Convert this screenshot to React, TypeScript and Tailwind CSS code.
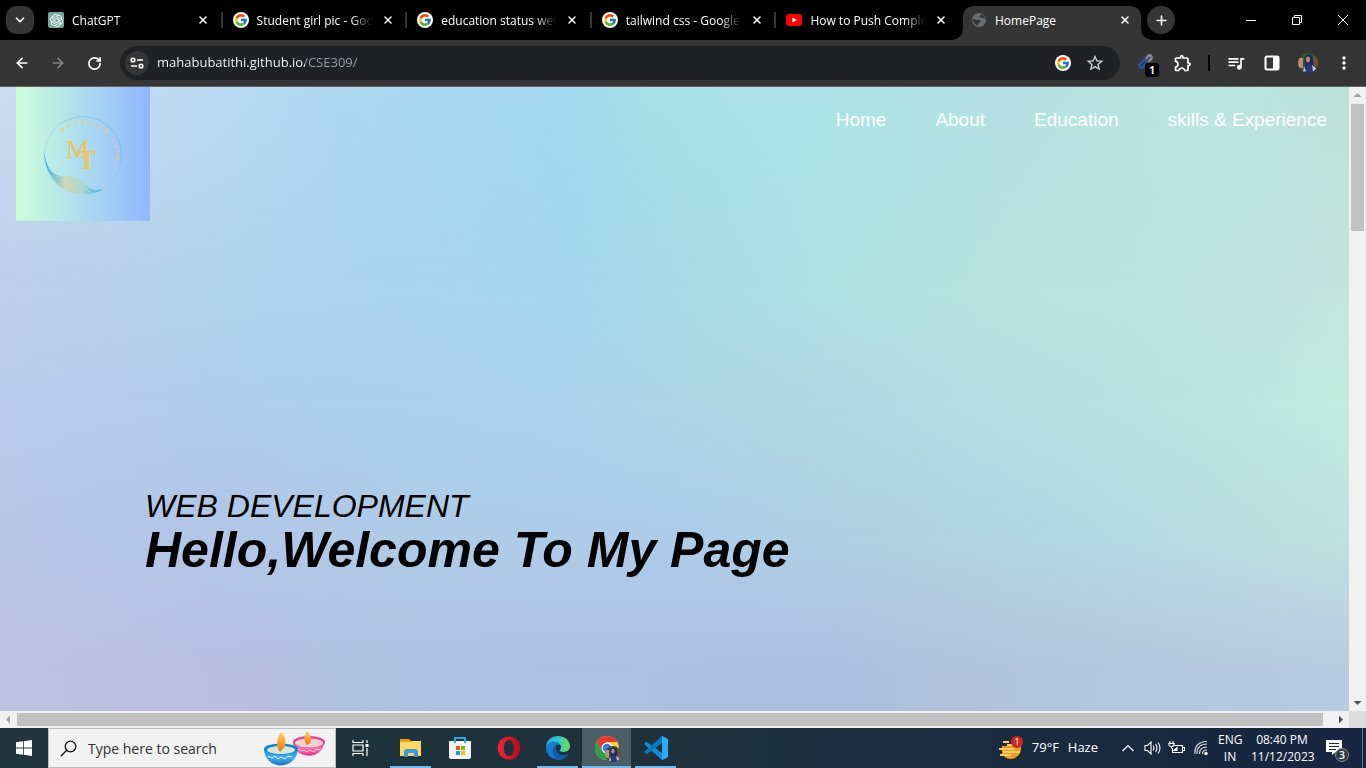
import React from "react";
import { FcGoogle } from "react-icons/fc";
import { SiOpenai } from "react-icons/si";
import { MdStarBorder, MdOutlineExtension, MdQueueMusic, MdMoreVert } from "react-icons/md";
import { ArrowLeft, ArrowRight, ChevronDown, Plus, RotateCw, X } from "lucide-react";

function GoogleBadge() {
  return (
    <span className="flex size-4 shrink-0 items-center justify-center rounded-full bg-white">
      <FcGoogle className="size-[14px]" />
    </span>
  );
}

function YouTubeIcon() {
  return (
    <svg viewBox="0 0 16 16" className="size-4 shrink-0">
      <rect y="2" width="16" height="12" rx="3" fill="#f00" />
      <path d="M6.4 5.5v5L10.8 8z" fill="#fff" />
    </svg>
  );
}

function ChatIcon() {
  return (
    <span className="flex size-4 shrink-0 items-center justify-center rounded-xs bg-[#75a99c]">
      <SiOpenai className="size-[13px] text-white" />
    </span>
  );
}

function GlobeIcon() {
  return (
    <svg viewBox="0 0 16 16" className="size-4 shrink-0">
      <circle cx="8" cy="8" r="7" fill="#686c71" />
      <path d="M1.500 7.500c2-.8 3.500.2 5 .6 2 .4 3 .3 3.300 1.500.2 1.200-2 1-2.300 2.200-.2 1-.5 1.600-1.700 1.800-1-2-3.600-2.600-4.300-6.100z" fill="#353535" />
      <path d="M9.800 2c1 1.200-.8 1.600-1.300 2.400-.4.900 1 1.300 2 1.100 1.300-.2 1.700 1.200 3.700 1.300-.3-2.300-2-4.200-4.400-4.800z" fill="#353535" />
    </svg>
  );
}

const tabs = [
  { title: "ChatGPT", icon: <ChatIcon /> },
  { title: "Student girl pic - Google", icon: <GoogleBadge /> },
  { title: "education status website", icon: <GoogleBadge /> },
  { title: "tailwind css - Google", icon: <GoogleBadge /> },
  { title: "How to Push Complete", icon: <YouTubeIcon /> },
];

function CloseButton({ title }: { title: string }) {
  return (
    <button aria-label={`Close ${title}`} className="flex size-4 shrink-0 items-center justify-center text-white">
      <X size={12} strokeWidth={3} />
    </button>
  );
}

function TabStrip() {
  return (
    <header className="flex h-10 shrink-0 items-center bg-black pl-1.5 text-white">
      <button aria-label="Search tabs" className="mr-1 flex size-7 shrink-0 items-center justify-center rounded-[10px] bg-[#353535]">
        <ChevronDown size={14} strokeWidth={3} />
      </button>
      <div className="flex w-[923px] min-w-0">
        {tabs.map((tab, i) => (
          <div key={tab.title} className="flex h-7 min-w-0 flex-1 items-center pl-2.5">
            {tab.icon}
            <span className="ml-2 w-[115px] min-w-0 overflow-hidden pt-0.5 text-xs font-medium whitespace-nowrap [mask-image:linear-gradient(to_right,black_82%,transparent)]">
              {tab.title}
            </span>
            <span className="ml-2">
              <CloseButton title={tab.title} />
            </span>
            {i < tabs.length - 1 && <span className="ml-auto h-4 w-0.5 bg-[#353535]" />}
          </div>
        ))}
      </div>
      <div className="relative ml-0.5 flex h-[34px] w-[178px] shrink-0 items-center self-end rounded-t-[10px] bg-[#353535] px-2 pb-1.5">
        <span className="absolute bottom-0 -left-2.5 size-2.5 bg-[radial-gradient(circle_at_0_0,#000_9px,#353535_10px)]" />
        <span className="absolute -right-2.5 bottom-0 size-2.5 bg-[radial-gradient(circle_at_100%_0,#000_9px,#353535_10px)]" />
        <GlobeIcon />
        <span className="ml-2 flex-1 pt-0.5 text-xs font-medium">HomePage</span>
        <CloseButton title="HomePage" />
      </div>
      <button aria-label="New tab" className="ml-1.5 flex size-7 shrink-0 items-center justify-center rounded-full bg-[#353535]">
        <Plus size={15} strokeWidth={2.5} />
      </button>
      <div className="ml-auto flex h-full">
        <button aria-label="Minimize" className="flex w-[46px] items-center justify-center">
          <svg viewBox="0 0 10 10" className="size-2.5"><path d="M0 5.5h10" stroke="#fff" /></svg>
        </button>
        <button aria-label="Restore" className="flex w-[46px] items-center justify-center">
          <svg viewBox="0 0 10 10" className="size-2.5" fill="none" stroke="#fff"><path d="M.5 2.5h7v7h-7zM2.5 2.5v-2h7v7h-2" /></svg>
        </button>
        <button aria-label="Close window" className="flex w-[46px] items-center justify-center">
          <svg viewBox="0 0 10 10" className="size-2.5" stroke="#fff"><path d="M0 0l10 10M10 0L0 10" /></svg>
        </button>
      </div>
    </header>
  );
}

function Avatar({ className }: { className: string }) {
  return (
    <svg viewBox="0 0 20 20" className={className}>
      <clipPath id="face"><circle cx="10" cy="10" r="10" /></clipPath>
      <g clipPath="url(#face)">
        <rect width="20" height="20" fill="#32512c" />
        <path d="M0 5h5v10H0z" fill="#b99078" />
        <path d="M15 2l5 5v6h-5z" fill="#74502e" />
        <path d="M7 20V6c0-5 7-6 8 0l1 7 3 7z" fill="#182a68" />
        <ellipse cx="10" cy="6.5" rx="2" ry="3" fill="#c58a68" />
        <path d="M8 12h6l1 8H7z" fill="#263a70" />
        <path d="M14 12l4 3v4h-3zM6 13l2 5-3 1z" fill="#b7bfdb" />
      </g>
    </svg>
  );
}

function Toolbar() {
  return (
    <div className="flex h-[47px] shrink-0 items-center border-b border-[#626262] bg-[#353535] px-3 text-white">
      <button aria-label="Back" className="flex size-5 items-center justify-center"><ArrowLeft size={16} strokeWidth={2.5} /></button>
      <button aria-label="Forward" className="ml-4 flex size-5 items-center justify-center text-[#858585]"><ArrowRight size={16} strokeWidth={2.5} /></button>
      <button aria-label="Reload" className="ml-4 flex size-5 items-center justify-center"><RotateCw size={15} strokeWidth={2.7} /></button>
      <form className="ml-4 flex h-[34px] min-w-0 flex-1 items-center rounded-full bg-[#202124] pr-[15px] pl-[5px]" onSubmit={(e) => e.preventDefault()}>
        <button type="button" aria-label="Site information" className="flex size-6 items-center justify-center rounded-full bg-[#353535]">
          <svg viewBox="0 0 14 12" className="h-3 w-3.5" fill="none" stroke="#fff" strokeWidth="1.6">
            <circle cx="3" cy="3" r="1.8" /><path d="M7 3h6M1 9h6" /><circle cx="11" cy="9" r="1.8" />
          </svg>
        </button>
        <label className="ml-2 flex flex-1 items-center text-[13px]">
          <span className="sr-only">Address</span>
          <input type="text" defaultValue="mahabubatithi.github.io/CSE309/" className="w-full bg-transparent bg-[linear-gradient(to_right,#fff_148px,#9aa0a6_148px)] bg-clip-text text-transparent caret-white outline-none" />
        </label>
        <GoogleBadge />
        <button type="button" aria-label="Bookmark" className="ml-3.5 text-[#d0d0d0]"><MdStarBorder className="size-5" /></button>
      </form>
      <button aria-label="Link extension" className="relative ml-[17px] size-[22px]">
        <svg viewBox="0 0 22 22" className="size-[22px]" fill="none" strokeWidth="2.6" strokeLinecap="round">
          <path d="M8 8l3-4c2-2 5 1 3 3l-2 2" stroke="#858991" />
          <path d="M8 7l-5 5c-2 3 1 5 3 3l4-4" stroke="#294fa8" />
        </svg>
        <span className="absolute top-[11px] left-2 flex size-3.5 items-center justify-center rounded-[3px] bg-black text-[10px] font-bold">1</span>
      </button>
      <button aria-label="Extensions" className="ml-3.5"><MdOutlineExtension className="size-5" /></button>
      <span className="ml-[15px] h-4 w-0.5 bg-black" />
      <button aria-label="Media" className="ml-4"><MdQueueMusic className="size-5" /></button>
      <button aria-label="Side panel" className="ml-4">
        <svg viewBox="0 0 20 20" className="size-5"><rect x="3.5" y="3.5" width="13" height="13" rx="1.5" fill="none" stroke="#fff" strokeWidth="2" /><path d="M11 3h6v14h-6z" fill="#fff" /></svg>
      </button>
      <button aria-label="Profile" className="ml-4"><Avatar className="size-5" /></button>
      <button aria-label="Menu" className="ml-4"><MdMoreVert className="size-5" /></button>
    </div>
  );
}

const ringLetters = [
  { char: "M", angle: -38 },
  { char: "A", angle: -25 },
  { char: "H", angle: -12 },
  { char: "B", angle: 2 },
  { char: "U", angle: 16 },
  { char: "B", angle: 29 },
  { char: "A", angle: 43 },
  { char: "T", angle: 63 },
  { char: "I", angle: 73 },
  { char: "T", angle: 82 },
  { char: "H", angle: 93 },
  { char: "I", angle: 104 },
];

function BrandLogo() {
  return (
    <svg viewBox="0 0 134 134" className="ml-4 size-[134px] shrink-0 bg-linear-to-r from-[#ccffd8] to-[#91b6ff]" role="img" aria-label="Mahbuba Tithi">
      <defs>
        <linearGradient id="ring" x1="0" x2="1" y1="1" y2="0">
          <stop stopColor="#3ab5f4" /><stop offset=".35" stopColor="#b9d6c8" /><stop offset=".7" stopColor="#7bbfd9" /><stop offset="1" stopColor="#65b8e8" />
        </linearGradient>
        <linearGradient id="wave"><stop stopColor="#27aef5" /><stop offset=".35" stopColor="#d6d9a9" /><stop offset=".65" stopColor="#acd5cf" /><stop offset="1" stopColor="#2caef0" /></linearGradient>
      </defs>
      <circle cx="67" cy="68" r="38.5" fill="none" stroke="url(#ring)" strokeWidth=".7" />
      <path d="M28.500 66c2 14 7 22 16 23 12 1 17 0 25 9 7 6 12 6 18 4-15 9-33 6-44-4-10-9-15-19-15-32z" fill="url(#wave)" />
      <path d="M37 89c19 2 23 3 36 16M39 92c16 1 19 3 29 13M42 96c11 1 15 4 21 10M48 90c12 1 14 3 24 14M54 91c7 1 12 5 20 14" fill="none" stroke="#a7dce8" strokeWidth=".5" />
      {ringLetters.map((letter) => (
        <text key={letter.angle} x="67" y="37" textAnchor="middle" transform={`rotate(${letter.angle} 67 69)`} fontFamily="Liberation Sans" fontSize="5" fontWeight="700" fill="#e6cd80">
          {letter.char}
        </text>
      ))}
      <text x="50" y="71" fontFamily="Liberation Serif" fontSize="26" fill="#eec45d">M</text>
      <text x="62" y="82" fontFamily="Liberation Serif" fontSize="27" fontWeight="700" fill="#eec45d">T</text>
    </svg>
  );
}

function PageBackdrop() {
  return (
    <div aria-hidden="true" className="absolute inset-0 bg-[linear-gradient(to_right,#bdc1e2,#b7bee0_20%,#afc2e0_27%,#aec0e2_50%,#adbfe0_62%,#b1c1dc_70%,#b8cbe2)]">
      <div className="absolute inset-0 bg-[linear-gradient(to_right,#bac6e6,#b2c6e8_15%,#aecbe6_30%,#aeccea_50%,#b0d0e2_65%,#b4d9e2_80%,#c0e2e0)] [mask-image:linear-gradient(to_bottom,black_72%,transparent_94%)]" />
      <div className="absolute inset-0 bg-[linear-gradient(to_right,#bccbeb,#b0cdea_15%,#acd0ea_28%,#aad2ec_40%,#acd6e6_50%,#b0d8e2_60%,#b8dfe2_75%,#bde3e2_88%,#c1ebdc)] [mask-image:linear-gradient(to_bottom,black_50%,transparent_72%)]" />
      <div className="absolute inset-0 bg-[linear-gradient(to_right,#c1ceec,#b4d3ea_13%,#acd4ee_25%,#a5d6ec_42%,#a9dae8_50%,#b0e2e2_62%,#b8e5e0_75%,#bfe3e2_90%,#c4e4dc)] [mask-image:linear-gradient(to_bottom,black_32%,transparent_50%)]" />
      <div className="absolute inset-0 bg-[linear-gradient(to_right,#cddcf2,#bddaf2_15%,#add8f0_25%,#a3d8ee_42%,#a9dfe9_48%,#ace3e6_60%,#b5e0e4_75%,#b9e6df_88%,#bde2d9)] [mask-image:linear-gradient(to_bottom,black,transparent_32%)]" />
    </div>
  );
}

function WebPage() {
  return (
    <main className="relative flex min-w-0 flex-1 overflow-hidden font-['Liberation_Sans',sans-serif]">
      <PageBackdrop />
      <div className="relative flex flex-1 flex-col">
        <div className="flex items-start justify-between">
          <BrandLogo />
          <nav className="flex gap-[49px] pt-[21px] pr-[22px] text-[19px] leading-6 text-white">
            <a href="#home">Home</a>
            <a href="#about">About</a>
            <a href="#education">Education</a>
            <a href="#skills">skills &amp; Experience</a>
          </nav>
        </div>
        <section className="mt-auto pb-[135px] pl-[145px] text-black italic">
          <p className="text-[32px] leading-9">WEB DEVELOPMENT</p>
          <h1 className="text-[50px] leading-[52px] font-bold">Hello,Welcome To My Page</h1>
        </section>
      </div>
    </main>
  );
}

function Arrow({ d, color }: { d: string; color: string }) {
  return <svg viewBox="0 0 17 17" className="size-[17px] shrink-0"><path d={d} fill={color} /></svg>;
}

function WindowsIcon() {
  return <svg viewBox="0 0 16 16" className="size-4"><path d="M0 2.3l7-1v6.2H0zM7.8 1.2L16 0v7.5H7.8zM0 8.4h7v6.3l-7-1zM7.8 8.4H16V16l-8.2-1.2z" fill="#fff" /></svg>;
}

function Lamps() {
  return (
    <svg viewBox="0 0 64 38" className="h-[38px] w-16">
      <defs>
        <linearGradient id="blueBowl" x2="0" y2="1"><stop stopColor="#168bd5" /><stop offset=".5" stopColor="#48adf0" /><stop offset="1" stopColor="#1971bd" /></linearGradient>
        <linearGradient id="pinkBowl" x2="0" y2="1"><stop stopColor="#e54294" /><stop offset=".5" stopColor="#fa72b3" /><stop offset="1" stopColor="#d93584" /></linearGradient>
        <linearGradient id="flame" x2="0" y2="1"><stop stopColor="#ffd166" /><stop offset=".6" stopColor="#fa9d24" /><stop offset="1" stopColor="#e57427" /></linearGradient>
      </defs>
      <path d="M30 13c1 17 29 20 32-1z" fill="url(#pinkBowl)" />
      <ellipse cx="46" cy="13" rx="16" ry="6" fill="#e43f91" />
      <ellipse cx="46" cy="14" rx="14" ry="4.5" fill="#fbd1cf" />
      <path d="M44 2c6 6 5 12 0 14-4-5-3-9 0-14z" fill="url(#flame)" />
      <path d="M35 20l3 2 3-1 3 2 3-2 3 2 4-3 3 1" stroke="#ffd8ea" fill="none" strokeWidth=".9" />
      <path d="M1 20c1 22 32 22 34 0z" fill="url(#blueBowl)" />
      <ellipse cx="18" cy="20" rx="17" ry="5.500" fill="#1685ca" />
      <ellipse cx="18" cy="21" rx="14" ry="4" fill="#d8e8d8" />
      <path d="M18 3c7 8 5 15-1 20-5-7-3-13 1-20z" fill="url(#flame)" />
      <path d="M5 27l4 2 3-2 3 3 3-2 4 2 3-3 4 1" stroke="#e3f4ff" fill="none" strokeWidth="1" />
    </svg>
  );
}

function FolderIcon() {
  return <svg viewBox="0 0 24 24" className="size-6"><path d="M1 3h9l2 2h10v15H1z" fill="#e2a30b" /><path d="M1 6h10l2-1h9v15H1z" fill="#ffd667" /><path d="M5 21v-5q0-3 3-3h8q3 0 3 3v5h-4v-4H9v4z" fill="#3899df" /></svg>;
}

function StoreIcon() {
  return <svg viewBox="0 0 24 24" className="size-6"><path d="M7 7V2h10v5" fill="none" stroke="#20afe7" strokeWidth="2" /><path d="M1 5h22v16q0 2-2 2H3q-2 0-2-2z" fill="#f4f4f4" /><path d="M7 5v2M17 5v2" stroke="#20afe7" strokeWidth="2" /><path d="M8 10h4v4H8z" fill="#f25022" /><path d="M13 10h4v4h-4z" fill="#7fba00" /><path d="M8 15h4v4H8z" fill="#00a4ef" /><path d="M13 15h4v4h-4z" fill="#ffb900" /></svg>;
}

function OperaIcon() {
  return <svg viewBox="0 0 24 24" className="size-6"><defs><linearGradient id="opera" x2="1" y2="0"><stop stopColor="#f32634" /><stop offset="1" stopColor="#b50a20" /></linearGradient></defs><path fillRule="evenodd" d="M12 .5a11.3 11.5 0 1 0 0 23 11.3 11.5 0 1 0 0-23zm0 3.5c3 0 5 3.500 5 8s-2 8-5 8-5-3.500-5-8 2-8 5-8z" fill="url(#opera)" /></svg>;
}

function EdgeIcon() {
  return (
    <svg viewBox="0 0 24 24" className="size-6">
      <defs>
        <linearGradient id="edgeTop"><stop stopColor="#2ba8e4" /><stop offset=".5" stopColor="#32c6ce" /><stop offset="1" stopColor="#69e34f" /></linearGradient>
        <linearGradient id="edgeBottom" x2="0" y2="1"><stop stopColor="#1685d2" /><stop offset="1" stopColor="#1674d3" /></linearGradient>
      </defs>
      <path d="M0 11C1-4 23-3 24 10c0 6-7 7-10 5-1-1 1-1 1-4 0-5-10-8-15 0z" fill="url(#edgeTop)" />
      <path d="M0 12c0-7 11-9 14-3-5-1-7 2-7 6 0 5 4 9 8 9C6 24 0 19 0 12z" fill="url(#edgeBottom)" />
      <path d="M10 9c-6 4-4 14 5 15 3-1 6-3 8-6-6 3-14 1-13-9z" fill="#0f5bb0" />
    </svg>
  );
}

function ChromeIcon() {
  return (
    <span className="relative block size-6">
      <svg viewBox="0 0 24 24" className="size-6"><circle cx="12" cy="12" r="12" fill="#ffcd40" /><path d="M1.600 6a12 12 0 0 1 20.800 0H12l-5 9z" fill="#e33b2e" /><path d="M1.600 6A12 12 0 0 0 12 24l5-9H7z" fill="#27a449" /><circle cx="12" cy="12" r="5.5" fill="#fff" /><circle cx="12" cy="12" r="4.3" fill="#397bea" /></svg>
      <Avatar className="absolute top-2.5 left-2.5 size-4" />
    </span>
  );
}

function CodeIcon() {
  return <svg viewBox="0 0 24 24" className="size-6"><path d="M18 0l6 3v18l-6 3L1 9 0 8l2-2h1l15 11z" fill="#118bd5" /><path d="M18 7L3 18H2l-2-2 1-1L18 0z" fill="#0877bd" /><path d="M18 0l6 3v18l-6 3z" fill="#2aa9f3" /></svg>;
}

const apps = [
  { name: "File Explorer", icon: <FolderIcon />, open: true, active: false },
  { name: "Microsoft Store", icon: <StoreIcon />, open: false, active: false },
  { name: "Opera", icon: <OperaIcon />, open: false, active: false },
  { name: "Edge", icon: <EdgeIcon />, open: true, active: false },
  { name: "Chrome", icon: <ChromeIcon />, open: true, active: true },
  { name: "Visual Studio Code", icon: <CodeIcon />, open: true, active: false },
];

function Taskbar() {
  return (
    <footer className="flex h-10 shrink-0 bg-linear-to-r from-[#20353e] via-[#1d303b] to-[#172541] text-white">
      <button aria-label="Start" className="flex w-12 items-center justify-center"><WindowsIcon /></button>
      <label className="flex w-72 items-center border border-[#bdbdbd] bg-[#f2f2f2] pr-2 pl-[11px] text-black">
        <span className="sr-only">Search</span>
        <svg viewBox="0 0 17 17" className="size-[17px] shrink-0" fill="none" stroke="#111" strokeWidth="1.3"><circle cx="10.5" cy="6.5" r="5.3" /><path d="M6.7 10.3L.8 16.2" /></svg>
        <input type="text" placeholder="Type here to search" className="ml-[11px] min-w-0 flex-1 bg-transparent pt-0.5 text-sm outline-none placeholder:text-[#303030]" />
        <Lamps />
      </label>
      <button aria-label="Task view" className="flex w-12 items-center justify-center">
        <svg viewBox="0 0 17 16" className="h-4 w-[17px]" fill="none" stroke="#fff" strokeWidth="1.2"><path d="M1 0v2.500h10V0M1 16v-2.500h10V16M1 5h10v6H1zM15 0v3M15 8v8" /><path d="M13.500 4h3v3h-3z" fill="#fff" stroke="none" /></svg>
      </button>
      <div className="flex pl-0.5">
        {apps.map((app) => (
          <button key={app.name} aria-label={app.name} className={app.active ? "relative flex w-[49px] items-center justify-center bg-[#4b5e68]" : "relative flex w-[49px] items-center justify-center"}>
            {app.icon}
            {app.open && <span className={app.active ? "absolute inset-x-0 bottom-0 h-0.5 bg-[#76b9ed]" : "absolute inset-x-1 bottom-0 h-0.5 bg-[#76b9ed]"} />}
          </button>
        ))}
      </div>
      <div className="ml-auto flex items-center">
        <button className="flex items-center text-[13px]">
          <svg viewBox="0 0 26 24" className="mr-2 h-6 w-[26px]">
            <path d="M4 10h19c1 7-4 13-10 13-4 0-7-2-9-5z" fill="#f4991e" />
            <path d="M5 6h6M9 9h8M1 13h15M5 16h17M2 19h11" stroke="#ffd16b" strokeWidth="1.8" />
            <circle cx="19" cy="6" r="6" fill="#c92a20" />
            <text x="19" y="9" textAnchor="middle" fontSize="9" fill="#fff" fontFamily="Open Sans">1</text>
          </svg>
          <span className="w-9 text-left">79°F</span><span>Haze</span>
        </button>
        <button aria-label="Hidden icons" className="ml-6">
          <svg viewBox="0 0 12 8" className="h-2 w-3" fill="none" stroke="#fff" strokeWidth="1.2"><path d="M.5 7L6 1.500 11.500 7" /></svg>
        </button>
        <button aria-label="Volume" className="ml-2.5">
          <svg viewBox="0 0 17 16" className="h-4 w-[17px]" fill="none" stroke="#fff" strokeWidth="1.1"><path d="M1 5.500h2.500L7 2v12l-3.500-3.500H1zM9 5.500q2 2.500 0 5M11.500 4q3 4 0 8M14 2.500q4 5.500 0 11" /></svg>
        </button>
        <button aria-label="Battery" className="ml-[7px]">
          <svg viewBox="0 0 17 16" className="h-4 w-[17px]" fill="none" stroke="#fff" strokeWidth="1.1"><path d="M6.500 5.500h8v7H4.500V8M14.500 7.500h2v3h-2M2 1v2M5 1v2M.8 3.500h5.400q0 3-2.700 3-2.700 0-2.700-3zM3.500 6.500v2" /><path d="M6 10.500l3-3v3z" fill="#fff" /></svg>
        </button>
        <button aria-label="Wi-Fi" className="ml-[9px]">
          <svg viewBox="0 0 16 16" className="size-4" fill="none" stroke="#fff" strokeWidth="1.1"><path d="M8.500 14q0-4 4.500-4M5.500 14q0-7 7.500-7M3 14Q3 4 13 4M1 14Q0 2 13 1.500" opacity=".85" /><circle cx="12" cy="13.5" r="1.2" fill="#fff" /></svg>
        </button>
        <button className="ml-2 w-6 text-center text-xs leading-[17px]">ENG<br />IN</button>
        <button className="ml-[9px] w-[62px] text-center text-xs leading-[17px] whitespace-nowrap">08:40 PM<br />11/12/2023</button>
        <button aria-label="Notifications" className="ml-3">
          <svg viewBox="0 0 28 28" className="size-7">
            <path d="M1 6h16v12h-6l-4 3v-3H1z" fill="#fff" />
            <path d="M4 9.500h10M4 12.500h10M4 15.500h7" stroke="#1b2944" />
            <circle cx="17" cy="21" r="6.5" fill="#30363f" stroke="#8b929d" />
            <text x="17" y="25" textAnchor="middle" fontSize="11" fontWeight="600" fill="#fff" fontFamily="Open Sans">3</text>
          </svg>
        </button>
        <span className="ml-[9px] h-10 w-1 border-l border-[#66707e]" />
      </div>
    </footer>
  );
}

export default function App() {
  return (
    <div className="flex h-screen flex-col overflow-hidden font-['Open_Sans','Noto_Sans',sans-serif]">
      <TabStrip />
      <Toolbar />
      <div className="flex min-h-0 flex-1">
        <WebPage />
        <div className="flex w-[17px] shrink-0 flex-col items-center justify-between bg-[#f1f1f1]">
          <Arrow d="M8.500 6l4 4h-8z" color="#a3a3a3" />
          <div className="mb-auto h-[127px] w-[13px] bg-[#c1c1c1]" />
          <Arrow d="M8.500 11l4-4h-8z" color="#505050" />
        </div>
      </div>
      <div className="flex h-[17px] shrink-0 items-center bg-[#f1f1f1]">
        <Arrow d="M6 8.500l4-4v8z" color="#a3a3a3" />
        <div className="mr-[9px] h-[13px] flex-1 bg-[#c1c1c1]" />
        <Arrow d="M11 8.500l-4-4v8z" color="#505050" />
        <div className="size-[17px] shrink-0 bg-[#dcdcdc]" />
      </div>
      <Taskbar />
    </div>
  );
}
